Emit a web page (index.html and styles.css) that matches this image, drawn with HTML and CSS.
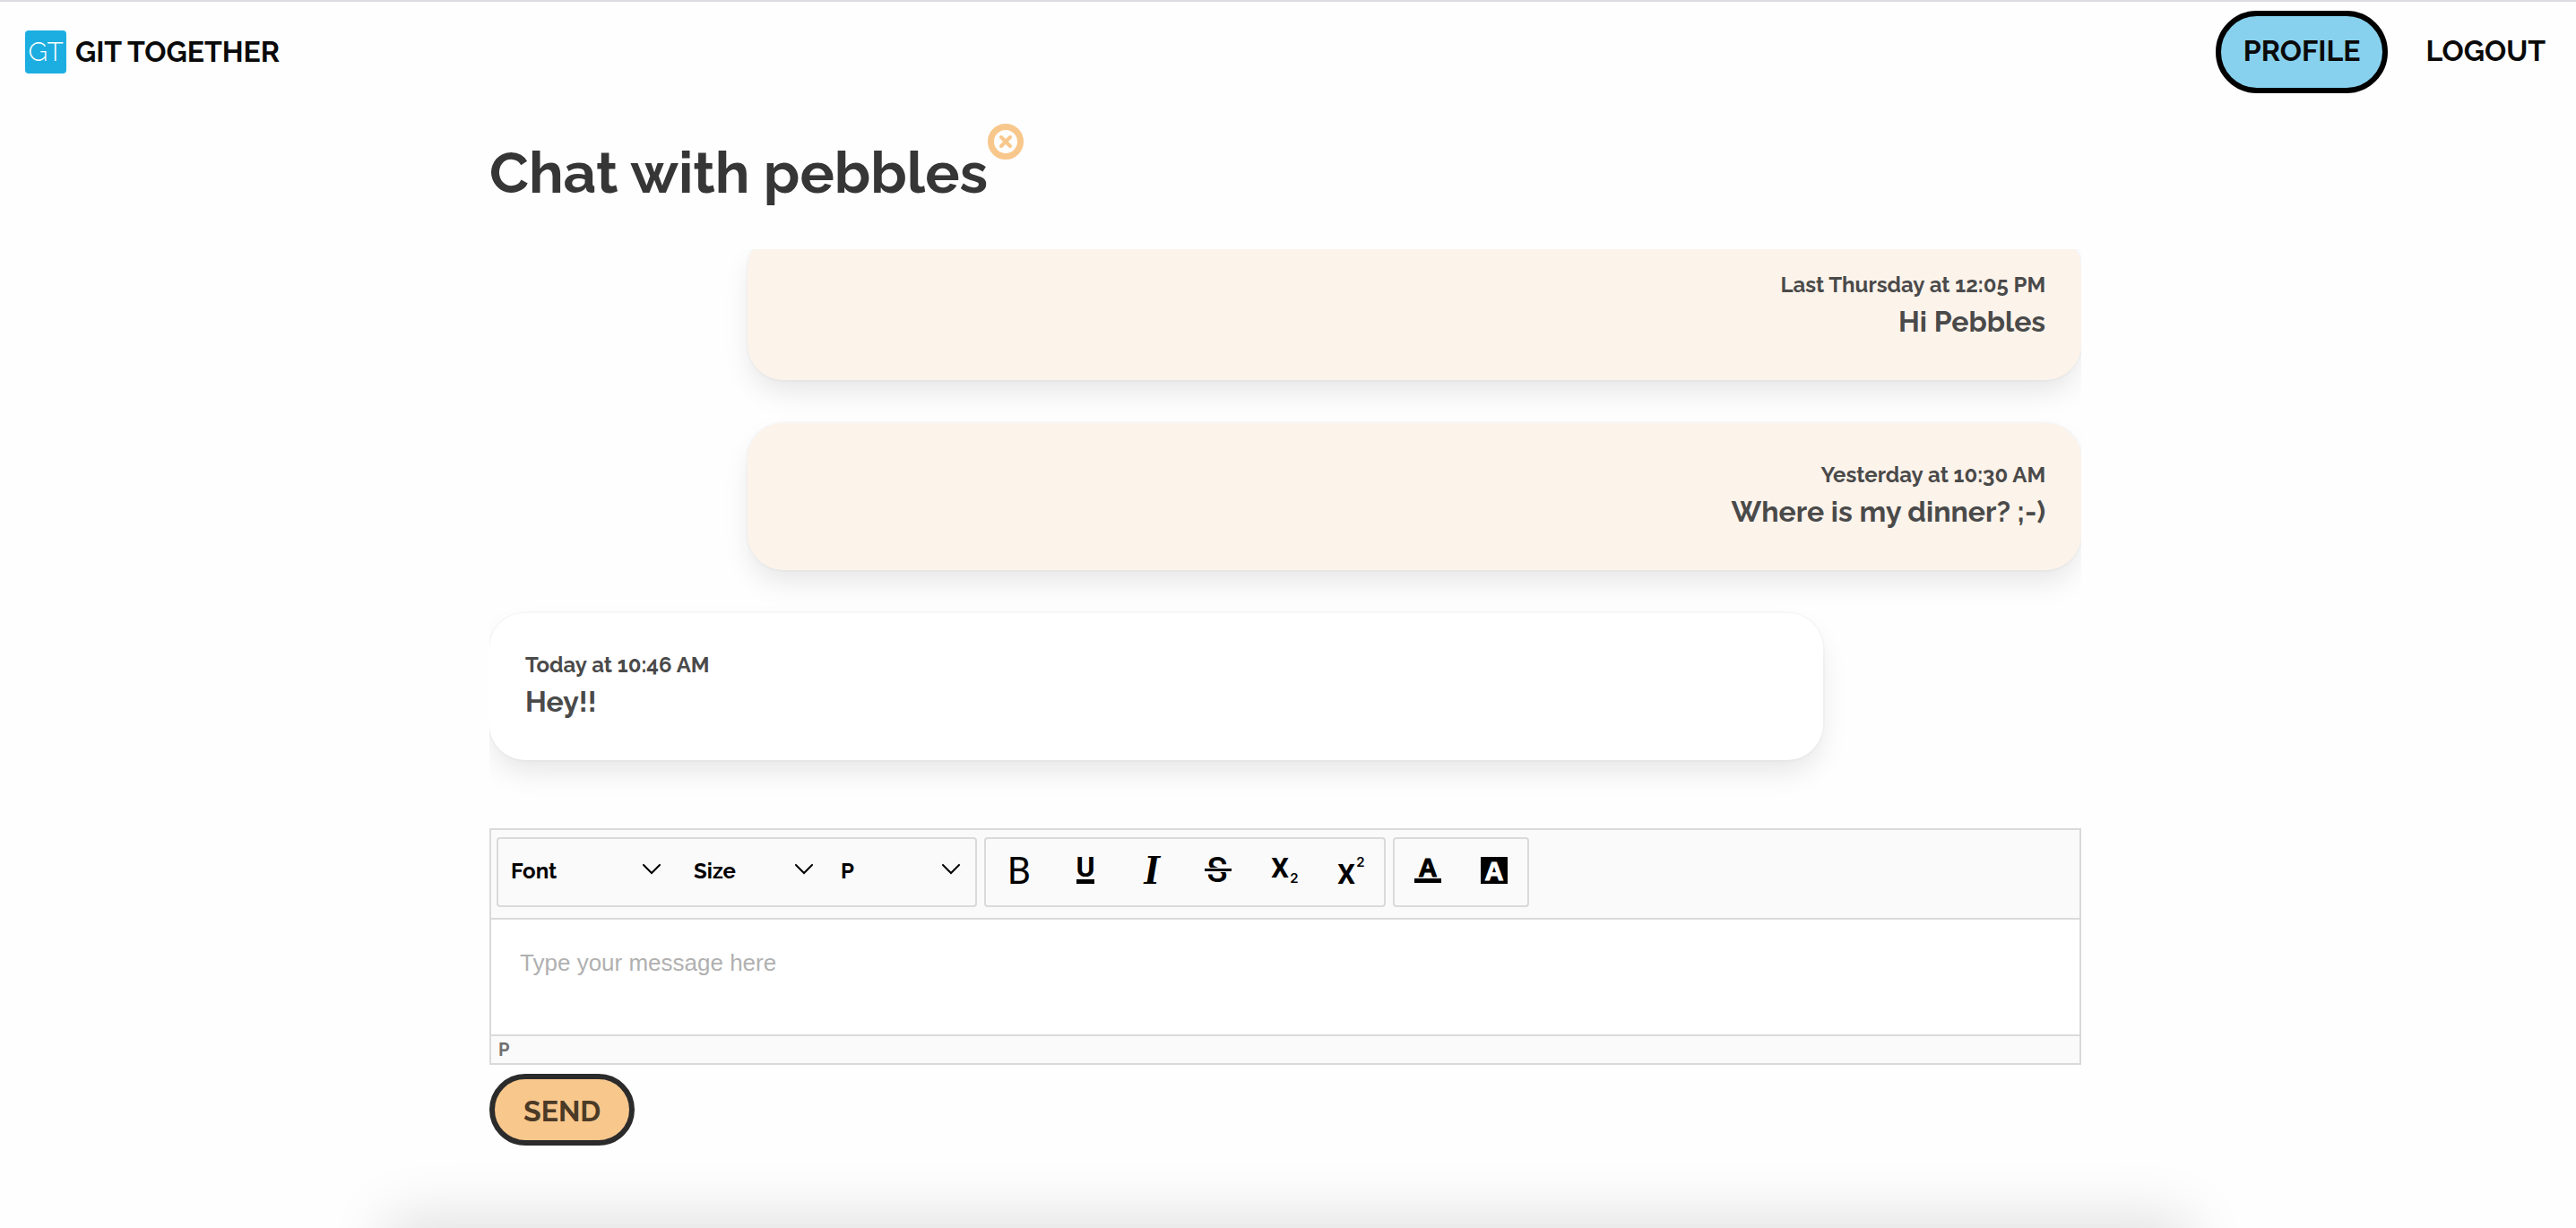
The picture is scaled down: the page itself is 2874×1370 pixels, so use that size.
FILE: index.html
```html
<!DOCTYPE html>
<html lang="en">
<head>
<meta charset="utf-8">
<meta name="viewport" content="width=device-width, initial-scale=1">
<title>Git Together</title>
<link rel="stylesheet" href="styles.css">
</head>
<body>
<header class="navbar">
  <a class="brand" href="#"><span class="brand-mark">GT</span><span>GIT TOGETHER</span></a>
  <nav class="nav-links">
    <a class="nav-link nav-link-active" href="#">PROFILE</a>
    <a class="nav-link" href="#">LOGOUT</a>
  </nav>
</header>
<main class="chat">
  <div class="chat-head">
    <h1 class="chat-title">Chat with pebbles</h1>
    <button class="close" type="button" aria-label="Close chat">
      <svg viewBox="0 0 40 40"><circle cx="20" cy="20" r="16.5" fill="none" stroke="currentColor" stroke-width="7"/><path d="M15 15l10 10M25 15l-10 10" stroke="currentColor" stroke-width="4" stroke-linecap="round"/></svg>
    </button>
  </div>
  <section class="messages" aria-label="Messages">
    <article class="message message-own"><time class="message-time">Last Thursday at 12:05 PM</time><p class="message-text">Hi Pebbles</p></article>
    <article class="message message-own"><time class="message-time">Yesterday at 10:30 AM</time><p class="message-text">Where is my dinner? ;-)</p></article>
    <article class="message"><time class="message-time">Today at 10:46 AM</time><p class="message-text">Hey!!</p></article>
  </section>
  <form class="composer">
    <div class="editor">
      <div class="toolbar">
        <div class="tool-group">
          <select class="picker picker-font" aria-label="Font"><option>Font</option></select>
          <select class="picker" aria-label="Size"><option>Size</option></select>
          <select class="picker" aria-label="Block format"><option>P</option></select>
        </div>
        <div class="tool-group">
          <button class="tool" type="button" aria-label="Bold"><svg viewBox="0 0 30 30"><text class="glyph" x="15" y="30" font-size="42">B</text></svg></button>
          <button class="tool" type="button" aria-label="Underline"><svg viewBox="0 0 30 30"><text class="glyph glyph-bold" x="15" y="22" font-size="32">U</text><path d="M5 25h20v5H5z"/></svg></button>
          <button class="tool" type="button" aria-label="Italic"><svg viewBox="0 0 30 30"><text class="glyph glyph-italic" x="15" y="30" font-size="46">I</text></svg></button>
          <button class="tool" type="button" aria-label="Strikethrough"><svg viewBox="0 0 30 30"><text class="glyph glyph-medium" x="14" y="28" font-size="38">S</text><path class="knockout" d="M0 12h30v5H0z"/><path d="M0 13h30v3H0z"/></svg></button>
          <button class="tool" type="button" aria-label="Subscript"><svg viewBox="0 0 30 30"><text class="glyph glyph-bold" x="10" y="23" font-size="31">X</text><text class="glyph glyph-index" x="26" y="29" font-size="15">2</text></svg></button>
          <button class="tool" type="button" aria-label="Superscript"><svg viewBox="0 0 30 30"><text class="glyph glyph-bold" x="10" y="30" font-size="31">X</text><text class="glyph glyph-index" x="26" y="11" font-size="15">2</text></svg></button>
        </div>
        <div class="tool-group">
          <button class="tool" type="button" aria-label="Font colour"><svg viewBox="0 0 30 30"><text class="glyph glyph-heavy" x="15" y="22" font-size="29">A</text><path d="M0 24h30v5H0z"/></svg></button>
          <button class="tool" type="button" aria-label="Highlight colour"><svg viewBox="0 0 30 30"><path d="M0 0h30v30H0z"/><text class="glyph glyph-heavy glyph-light" x="15" y="26" font-size="29">A</text></svg></button>
        </div>
      </div>
      <textarea class="editor-input" aria-label="Message" placeholder="Type your message here"></textarea>
      <div class="status">P</div>
    </div>
    <button class="send" type="submit">SEND</button>
  </form>
</main>
<footer class="page-footer"></footer>
</body>
</html>
```
FILE: styles.css
```css
* { box-sizing: border-box; }

body {
  margin: 0;
  height: 100vh;
  overflow: hidden;
  display: flex;
  flex-direction: column;
  background: #fefefe;
  color: #4a4a4a;
  font-family: Raleway, Lato, sans-serif;
  font-size: 32px;
  font-weight: 700;
  line-height: 48px;
}

button, select, textarea { font: inherit; margin: 0; }

a { color: #0a0a0a; text-decoration: none; }

.navbar {
  flex: none;
  display: flex;
  align-items: center;
  justify-content: space-between;
  border-top: 2px solid #dcdbe2;
  padding: 10px 0 10px 28px;
  background: #fefefe;
}

.brand { display: flex; align-items: center; gap: 10px; }

.brand-mark {
  width: 46px;
  height: 48px;
  border-radius: 4px;
  background: #1caee1;
  color: #fff;
  font-size: 30px;
  font-weight: 300;
  text-align: center;
}

.nav-links { display: flex; gap: 8px; }

.nav-link {
  padding: 15px 28px 17px;
  border: 6px solid transparent;
  border-radius: 46px;
}

.nav-link-active {
  padding-inline: 25px;
  border-color: #000;
  background: #87d1ee;
}

.chat {
  flex: none;
  width: 61.8%;
  margin-left: 19%;
  padding-top: 14px;
}

.chat-head { display: flex; align-items: flex-start; margin-bottom: 28px; }

.chat-title {
  margin: 0;
  padding: 20px 0 12px;
  color: #363636;
  font-size: 64px;
  line-height: 90px;
}

.close {
  width: 40px;
  height: 40px;
  margin-top: 10px;
  padding: 0;
  border: 0;
  background: none;
  color: #f8c78c;
}

.close svg { display: block; }

.messages {
  display: flex;
  flex-direction: column;
  justify-content: flex-end;
  max-height: 618px;
  margin-bottom: 28px;
  overflow: hidden;
}

.message {
  flex: none;
  width: 83.8%;
  margin-bottom: 48px;
  padding: 40px;
  border-radius: 40px;
  background: #fff;
  box-shadow: 0 16px 32px -4px rgba(10, 10, 10, .1), 0 0 0 2px rgba(10, 10, 10, .02);
}

.message-own {
  align-self: flex-end;
  background: #fcf3ea;
  text-align: right;
}

.message-time { display: block; font-size: 24px; line-height: 36px; }

.message-text { margin: 0; padding-bottom: 2px; line-height: 46px; }

.editor { border: 2px solid #dadada; background: #fff; }

.toolbar {
  display: flex;
  gap: 8px;
  padding: 8px 6px 12px;
  border-bottom: 2px solid #dadada;
  background: #fafafa;
}

.tool-group {
  display: flex;
  border: 2px solid #dadada;
  border-radius: 4px;
}

.picker {
  appearance: none;
  width: 164px;
  height: 74px;
  padding: 0 40px 2px 14px;
  border: 0;
  background: url("data:image/svg+xml,%3Csvg xmlns='http://www.w3.org/2000/svg' width='20' height='12' viewBox='0 0 20 12'%3E%3Cpath d='M1 1l9 9 9-9' fill='none' stroke='%23000' stroke-width='2' stroke-linecap='round'/%3E%3C/svg%3E") no-repeat right 17px top 28px;
  color: #000;
  font-size: 24px;
}

.picker-font { width: 198px; margin-right: 6px; }

.tool {
  display: grid;
  place-items: center;
  width: 74px;
  height: 74px;
  padding: 0 0 4px;
  border: 0;
  background: none;
}

.tool svg { width: 30px; height: 30px; overflow: visible; }

.glyph {
  font-family: Roboto, sans-serif;
  font-weight: 400;
  text-anchor: middle;
}

.glyph-medium { font-weight: 500; }
.glyph-bold { font-weight: 700; }
.glyph-index { font-family: Inter, sans-serif; font-weight: 600; }
.glyph-heavy { font-family: "Liberation Sans", sans-serif; font-weight: 700; stroke: #000; stroke-width: 1px; }
.glyph-italic { font-family: "Liberation Serif", serif; font-style: italic; font-weight: 700; }
.glyph-light { fill: #fff; stroke: #fff; }
.knockout { fill: #fafafa; }

.editor-input {
  display: block;
  width: 100%;
  height: 128px;
  padding: 30px 32px;
  border: 0;
  outline: 0;
  resize: none;
  background: #fff;
  color: #333;
  font-family: "Helvetica Neue", "Liberation Sans", sans-serif;
  font-size: 26px;
  font-weight: 300;
  line-height: 36px;
}

.editor-input::placeholder { color: #b0b0b0; opacity: 1; }

.status {
  padding: 0 8px;
  border-top: 2px solid #dadada;
  background: #fafafa;
  color: #707070;
  font-size: 20px;
  line-height: 30px;
}

.send {
  display: block;
  margin-top: 10px;
  padding: 12px 32px 8px;
  border: 6px solid #2b2b2b;
  border-radius: 40px;
  background: #f8c78c;
  color: #4b3a26;
}

.page-footer {
  flex: none;
  width: 70%;
  height: 200px;
  margin-top: 92px;
  margin-left: 15%;
  box-shadow: 0 -12px 66px rgba(10, 10, 10, .12);
}
```
